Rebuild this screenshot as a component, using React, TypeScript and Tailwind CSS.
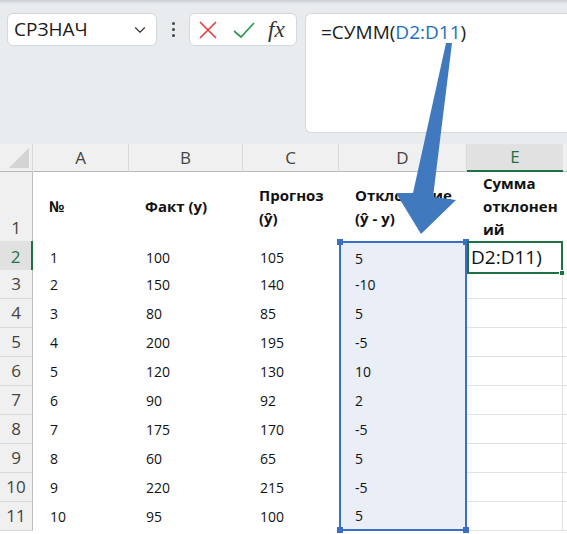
import { ChevronDown } from 'lucide-react';

const font = "font-['Open_Sans','Noto_Sans',sans-serif]";

const rows = [
  ['1', '100', '105', '5'],
  ['2', '150', '140', '-10'],
  ['3', '80', '85', '5'],
  ['4', '200', '195', '-5'],
  ['5', '120', '130', '10'],
  ['6', '90', '92', '2'],
  ['7', '175', '170', '-5'],
  ['8', '60', '65', '5'],
  ['9', '220', '215', '-5'],
  ['10', '95', '100', '5'],
];

const cols = 'grid grid-cols-[33px_96px_114px_96px_128px_96px_1fr]';

function FormulaBar() {
  return (
    <div className="relative h-[144px] bg-[#e9ecef] pl-[7px] pt-[13px]">
      {/* thin shade along the top edge */}
      <div className="absolute inset-x-0 top-0 h-[4px] bg-gradient-to-b from-[#c9ccd0] to-[#e9ecef]" />
      <div className="flex items-start">
        <div className="flex h-[33px] w-[150px] items-center justify-between rounded-[6px] border border-[#d6d9dc] bg-white pl-[6px] pr-[7px]">
          <span className="text-[19px] leading-none text-[#1b1b1b]">СРЗНАЧ</span>
          <ChevronDown className="h-[18px] w-[18px] text-[#333]" strokeWidth={1.5} />
        </div>
        <div className="flex h-[33px] w-[32px] flex-col items-center justify-center gap-[3px]">
          <span className="h-[3px] w-[3px] rounded-full bg-[#444]" />
          <span className="h-[3px] w-[3px] rounded-full bg-[#444]" />
          <span className="h-[3px] w-[3px] rounded-full bg-[#444]" />
        </div>
        <div className="flex h-[33px] w-[108px] items-center rounded-[6px] border border-[#d6d9dc] bg-white pl-[8px]">
          <svg width="20" height="20" viewBox="0 0 20 20" className="mr-[14px]">
            <path d="M2 2 L18 18 M18 2 L2 18" stroke="#e5383b" strokeWidth="1.6" fill="none" />
          </svg>
          <svg width="24" height="20" viewBox="0 0 24 20" className="mr-[12px]">
            <path d="M2 11 L9 17 L22 3" stroke="#2e9a4c" strokeWidth="1.7" fill="none" />
          </svg>
          <span className="font-['Liberation_Serif',serif] text-[23px] italic leading-none text-[#333]">fx</span>
        </div>
        <div className="ml-[8px] flex h-[120px] flex-1 rounded-l-[6px] border border-r-0 border-[#d6d9dc] bg-white pl-[15px] pt-[5px]">
          <span className="text-[19px] leading-[26px] text-[#1b1b1b]">
            =СУММ(<span className="text-[#1c6fbe]">D2:D11</span>)
          </span>
        </div>
      </div>
    </div>
  );
}

function ColumnHeaders() {
  const letters = ['A', 'B', 'C', 'D'];
  return (
    <div className={`${cols} h-[28px] border-b border-[#b9b9b9] bg-[#f0f0f0] text-[17px] text-[#444]`}>
      <div className="relative border-r border-[#d9d9d9]">
        <div className="absolute bottom-[4px] right-[3px] h-0 w-0 border-b-[20px] border-l-[20px] border-b-[#d4d4d4] border-l-transparent" />
      </div>
      {letters.map((l) => (
        <div key={l} className="flex items-center justify-center border-r border-[#d9d9d9]">
          {l}
        </div>
      ))}
      <div className="flex items-center justify-center border-b-2 border-[#1e7145] bg-[#e1e1e1] text-[#1e7145]">E</div>
      <div />
    </div>
  );
}

export default function App() {
  return (
    <div className={`relative h-[534px] w-[567px] overflow-hidden bg-white ${font}`}>
      <FormulaBar />
      <ColumnHeaders />

      {/* header row */}
      <div className={`${cols} h-[69px] text-[15px] font-bold leading-[23px] text-[#111]`}>
        <div className="flex items-end justify-center border-r border-[#bdbdbd] bg-[#f0f0f0] pb-[2px] text-[17px] font-normal text-[#444]">1</div>
        <div className="flex items-center pl-[16px]">№</div>
        <div className="flex items-center pl-[16px]">Факт (y)</div>
        <div className="flex items-center pl-[16px]">Прогноз<br />(ŷ)</div>
        <div className="flex items-center pl-[16px]">Отклонение<br />(ŷ - y)</div>
        <div className="flex items-center pl-[16px]">Сумма<br />отклонен<br />ий</div>
        <div />
      </div>

      {rows.map((r, i) => {
        const first = i === 0;
        const last = i === rows.length - 1;
        return (
          <div key={i} className={`${cols} h-[29px] text-[14px] text-[#111]`}>
            <div
              className={`flex items-center justify-center border-b border-[#d9d9d9] text-[17px] ${
                first ? 'border-r-2 border-r-[#1e7145] bg-[#e1e1e1] text-[#1e7145]' : 'border-r border-r-[#bdbdbd] bg-[#f0f0f0] text-[#444]'
              }`}
            >
              {i + 2}
            </div>
            <div className="flex items-center pl-[17px]">{r[0]}</div>
            <div className="flex items-center pl-[17px]">{r[1]}</div>
            <div className="flex items-center pl-[17px]">{r[2]}</div>
            <div
              className={`relative flex items-center border-x-2 border-[#3b6fc3] bg-[#e9eef7] pl-[14px] ${first ? 'border-t-2' : ''} ${
                last ? 'border-b-2' : ''
              }`}
            >
              {r[3]}
              {first && (
                <>
                  <span className="absolute -left-[4px] -top-[4px] h-[6px] w-[6px] bg-[#3b6fc3]" />
                  <span className="absolute -right-[4px] -top-[4px] h-[6px] w-[6px] bg-[#3b6fc3]" />
                </>
              )}
              {last && (
                <>
                  <span className="absolute -bottom-[4px] -left-[4px] h-[6px] w-[6px] bg-[#3b6fc3]" />
                  <span className="absolute -bottom-[4px] -right-[4px] h-[6px] w-[6px] bg-[#3b6fc3]" />
                </>
              )}
            </div>
            {first ? (
              <div className="relative flex items-center border-2 border-[#1e7145] pl-[2px] text-[19px] text-[#111]">
                D2:D11)
                <span className="absolute -bottom-[4px] -right-[4px] h-[6px] w-[6px] border border-white bg-[#1e7145]" />
              </div>
            ) : (
              <div className="border-b border-r border-[#e1e1e1]" />
            )}
            <div className="border-b border-[#e1e1e1]" />
          </div>
        );
      })}

      {/* arrow pointing from the formula down to the selected range */}
      <svg className="pointer-events-none absolute left-0 top-0" width="567" height="534" viewBox="0 0 567 534">
        <path d="M446 43 L452 43 L433 197 L456 200 L421 234 L396 193 L413 193 Z" fill="#4079bd" />
      </svg>
    </div>
  );
}
